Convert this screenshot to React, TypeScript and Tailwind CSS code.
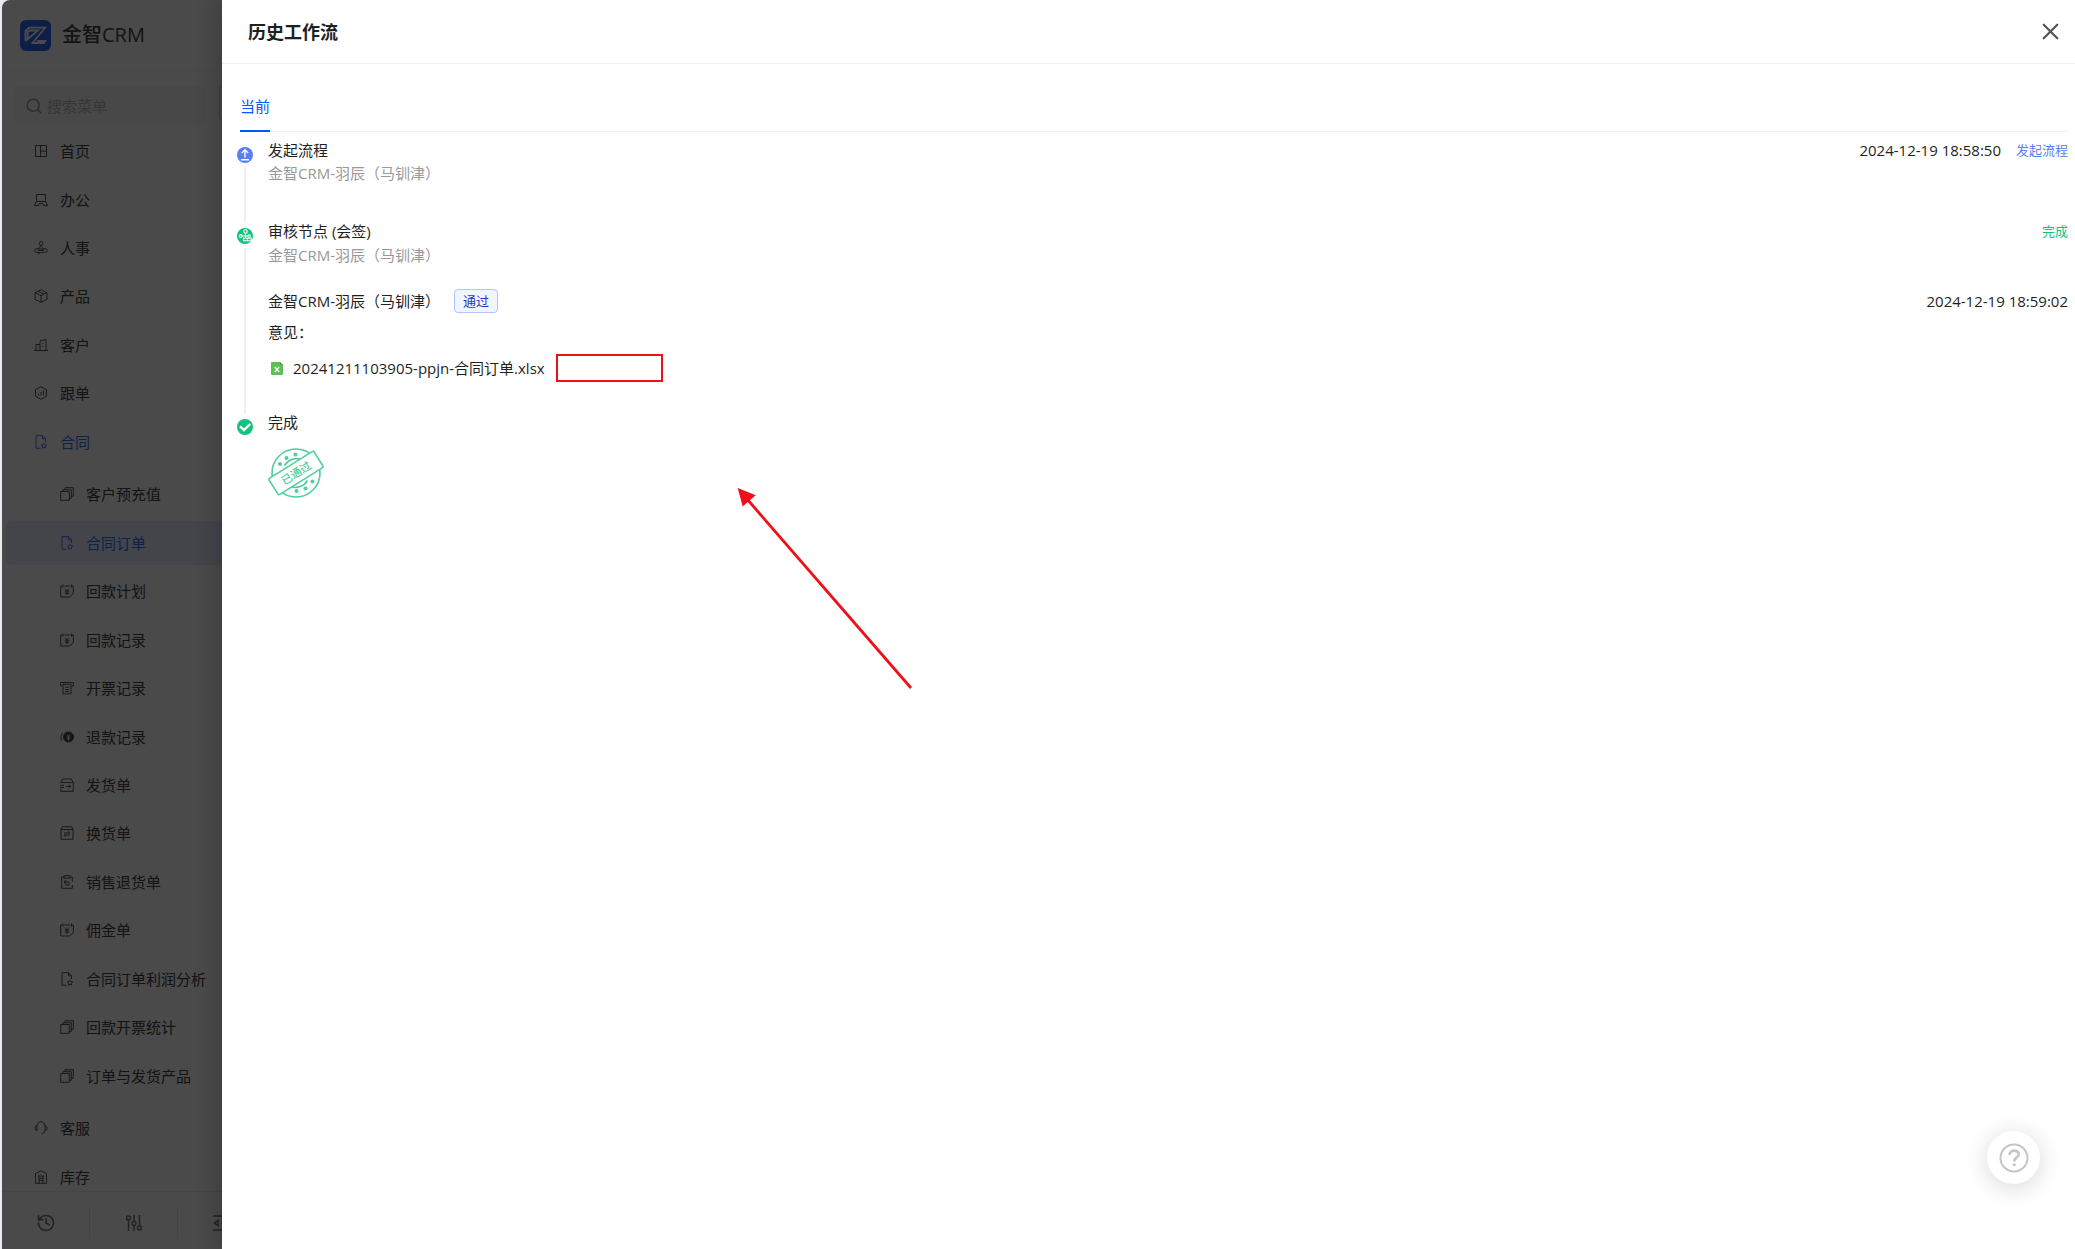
import { Search, X, History } from "lucide-react";
import type { ReactNode } from "react";

const paths: Record<string, ReactNode> = {
    home: <><path d="M1.5 1.5h11v11h-11zM6.5 1.5v11M6.5 7h6" /></>,
    office: <><path d="M2.5 1.5h9v7h-9zM.5 12.5h4l1-2h3l1 2h4M2.5 8.5l-2 4M11.5 8.5l2 4" /></>,
    people: <><circle cx="7" cy="2.4" r="1.9" /><path d="M7 4.3C7 6 5 6 4.4 8h5.2C9 6 7 6 7 4.3M4.4 8C2.5 7.5.8 8 .6 9.5c0 2 2.900 2.200 5 2l-.8 2M9.600 8c1.900-.5 3.600 0 3.800 1.500 0 2-3 2.200-7 2M4 9.500h6" /></>,
    product: <><path d="M7 .7l6 3v6.600l-6 3-6-3V3.700zM1 3.700l6 3 6-3M7 6.700v6.600M4 2.200l6 3" /></>,
    customer: <><path d="M0 12.500h14M2 12.500v-6h4M6 12.500V3l6-1.500v11M4 9h.5M8.500 5.500h1M8.500 8.500h1" /></>,
    follow: <><path d="M7 .7l5.500 3v6.600l-5.500 3-5.500-3V3.700zM4.500 7.500v2M7 6v3.500M9.500 4.500v5" /></>,
    contract: <><path d="M6.500 13.300H2V.7h6.500l3 3v3.500M8.500.7v3h3" /><path d="M10 8.200l.9 1.500 1.700.3-1.200 1.300.2 1.800-1.600-.7-1.600.7.2-1.800L7.400 10l1.700-.3z" /></>,
    copies: <><path d="M.7 4.500h8.600v8.800H.7zM3 4.500V2.700h8.300v8.600H9.300M5 2.700V.700h8.300v8.600h-2" /></>,
    yen: <><path d="M4.500 2H10M2.500 2H.700v11h9l3.600-3.500V2h-1.800M3 .5v3M11.500.5v3M5 4.700l2 2.300 2-2.300M4.800 7.200h4.400M4.800 9.200h4.400M7 7v4" /></>,
    printer: <><path d="M2.500 5H.7V1.500h12.600V5h-1.800M3 3.300h8v9.500H3zM5.200 6.300h3.600M5.200 8.500h3.600M5.200 10.500h3.600" /></>,
    refund: <><circle cx="8.500" cy="7" r="5" fill="currentColor" /><path d="M2.500 3C.5 5.500.5 8.500 2 11" /><path d="M6.800 4.500l1.700 2 1.700-2M6.700 7h3.600M6.700 8.800h3.600M8.500 6.500v4" stroke="#fff" /></>,
    ship: <><path d="M.7 4.500l2-3.500h8.600l2 3.500v8.800H.7V11M.7 4.500h12.600M0 7.300h4M0 9.500h4M6 8.500h4.500M9 6.700l1.700 1.800L9 10.300" /></>,
    swap: <><path d="M1 3.500l1.500-2.800h9L13 3.500v9.800H1zM1 3.500h12M4 7h6L8 5.300M10 9H4l2 1.700" /></>,
    back: <><path d="M4 2H1.700v11.300h10.600V10M12.300 7V2H10M4 .700h6v2.500H4zM4 7h5v3H5M6 5L4 7l2 1.500" /></>,
    service: <><path d="M3 9.500V5C3 2.500 5 .7 7 .7S11 2.500 11 5v4.500C11 11.500 9.500 12.600 7.500 12.800M3 5C.2 5 .2 9.500 3 9.500M11 5c2.800 0 2.800 4.500 0 4.500" /></>,
    stock: <><path d="M1.500 13.300V3.500L7 .7l5.500 2.800v9.800zM4 6h6M5 6v7M9 6v7M5 8.300h4M5 10.500h4" /></>,
};

const MenuIcon = ({ name }: { name: string }) => (
    <svg viewBox="0 0 14 14" className="size-3.5 shrink-0" fill="none" stroke="currentColor" strokeWidth="0.9">
        {paths[name]}
    </svg>
);

const topMenu = [
    { icon: "home", label: "首页" },
    { icon: "office", label: "办公" },
    { icon: "people", label: "人事" },
    { icon: "product", label: "产品" },
    { icon: "customer", label: "客户" },
    { icon: "follow", label: "跟单" },
    { icon: "contract", label: "合同", open: true },
];

const subMenu = [
    { icon: "copies", label: "客户预充值" },
    { icon: "contract", label: "合同订单", active: true },
    { icon: "yen", label: "回款计划" },
    { icon: "yen", label: "回款记录" },
    { icon: "printer", label: "开票记录" },
    { icon: "refund", label: "退款记录" },
    { icon: "ship", label: "发货单" },
    { icon: "swap", label: "换货单" },
    { icon: "back", label: "销售退货单" },
    { icon: "yen", label: "佣金单" },
    { icon: "contract", label: "合同订单利润分析" },
    { icon: "copies", label: "回款开票统计" },
    { icon: "copies", label: "订单与发货产品" },
];

const bottomMenu = [
    { icon: "service", label: "客服" },
    { icon: "stock", label: "库存" },
];

const MenuItem = ({ icon, label, open = false }: { icon: string; label: string; open?: boolean }) => (
    <li className="flex items-center">
        <a href="#" className={`flex h-11 w-full items-center gap-3 pl-8 ${open ? "text-[#3a73f5]" : ""}`}>
            <MenuIcon name={icon} />
            {label}
        </a>
    </li>
);

const SubMenuItem = ({ icon, label, active = false }: { icon: string; label: string; active?: boolean }) => (
    <li className="flex items-center pl-1">
        <a
            href="#"
            className={`flex h-11 w-full items-center gap-3 rounded-md pl-[54px] ${active ? "bg-[#e6eeff] text-[#3a73f5]" : ""}`}>
            <MenuIcon name={icon} />
            {label}
        </a>
    </li>
);

const Logo = () => (
    <svg viewBox="0 0 31 31" className="size-[31px]">
        <rect width="31" height="31" rx="6" fill="#2f6df6" />
        <path d="M5.500 21V11l3.500-3.300h16.200L12.500 23H24l1.200-2H17M5.500 21L18 10.500H9.500L7.700 12v8" fill="none" stroke="#fff" strokeWidth="1.800" />
    </svg>
);

const Sidebar = () => (
    <aside className="relative w-[220px] shrink-0 overflow-hidden rounded-tl-lg bg-white text-[#444]">
        <div className="flex h-full w-[264px] flex-col">
            <div className="flex h-[71px] shrink-0 items-center gap-[11px] border-b border-[#f3f3f3] pl-[18px]">
                <Logo />
                <span className="text-xl font-medium">金智CRM</span>
            </div>
            <div className="mt-[15px] flex shrink-0 gap-3 pl-[11px]">
                <label className="flex h-[39px] w-[194px] items-center gap-1 rounded-lg bg-[#f8f8f8] pl-3 text-[#999]">
                    <Search className="size-[18px] shrink-0" strokeWidth={2} />
                    <input
                        type="text"
                        aria-label="搜索菜单"
                        placeholder="搜索菜单"
                        className="w-36 bg-transparent outline-none placeholder:text-[#bbb]"
                    />
                </label>
                <button aria-label="添加" className="h-[34px] w-8 rounded border border-[#ccc]" />
            </div>
            <nav className="min-h-0 flex-1 overflow-hidden pt-0.5">
                <ul className="grid h-[339px] auto-rows-fr">
                    {topMenu.map((item) => <MenuItem key={item.label} {...item} />)}
                </ul>
                <ul className="my-1 grid h-[630px] auto-rows-fr bg-[#fdfdfd]">
                    {subMenu.map((item) => <SubMenuItem key={item.label} {...item} />)}
                </ul>
                <ul className="grid h-[97px] auto-rows-fr">
                    {bottomMenu.map((item) => <MenuItem key={item.label} {...item} />)}
                </ul>
            </nav>
            <div className="grid h-[58px] shrink-0 grid-cols-3 items-center divide-x divide-[#e5e5e5] border-t border-[#eee] pt-1 text-[#777]">
                <button aria-label="历史" className="flex h-8 items-center justify-center">
                    <History className="size-5" strokeWidth={2} />
                </button>
                <button aria-label="设置" className="flex h-8 items-center justify-center">
                    <svg viewBox="0 0 16 16" className="size-4" fill="none" stroke="currentColor" strokeWidth="1.500">
                        <path d="M2.500 5v11M8 0v6M8 11v5M13.500 0v11" />
                        <circle cx="2.500" cy="3" r="2" />
                        <circle cx="8" cy="8.500" r="2" />
                        <circle cx="13.500" cy="13" r="2" />
                    </svg>
                </button>
                <button aria-label="收起" className="flex h-8 items-center justify-center">
                    <svg viewBox="0 0 18 16" className="h-4 w-[18px]" fill="none" stroke="currentColor" strokeWidth="1.500">
                        <path d="M0 1h18M0 15h18M8 8h10" />
                        <path d="M5 5.500v5L1.500 8z" />
                    </svg>
                </button>
            </div>
        </div>
        <div className="absolute inset-0 bg-black/71" />
    </aside>
);

const StartIcon = () => (
    <svg viewBox="0 0 16 16" className="size-4">
        <circle cx="8" cy="8" r="8" fill="#597ef7" />
        <path d="M8 10.500V3M4.800 6L8 2.800 11.200 6M4 12.700h8" fill="none" stroke="#fff" strokeWidth="1.400" />
    </svg>
);

const ReviewIcon = () => (
    <svg viewBox="0 0 16 16" className="size-4">
        <circle cx="8" cy="8" r="8" fill="#13c27d" />
        <g fill="none" stroke="#fff" strokeWidth="1.100">
            <circle cx="8.500" cy="3.500" r="1.700" />
            <circle cx="3.800" cy="8" r="1.400" />
            <circle cx="12" cy="8" r="1.300" />
            <path d="M8.500 5.200V10M5.200 8h5.500M6.500 10.200h4v2.500h-4zM10.500 12.700h3.700v-2.500h-3.700" />
        </g>
    </svg>
);

const DoneIcon = () => (
    <svg viewBox="0 0 16 16" className="size-4">
        <circle cx="8" cy="8" r="8" fill="#13c27d" />
        <path d="M3 7.300l3.900 3.700 6.300-6" fill="none" stroke="#fff" strokeWidth="2.400" />
    </svg>
);

const FileIcon = () => (
    <svg viewBox="0 0 12 13" className="h-[13px] w-3 shrink-0">
        <path d="M1 0h8l3 3v9a1 1 0 0 1-1 1H1a1 1 0 0 1-1-1V1a1 1 0 0 1 1-1z" fill="#5bc153" />
        <path d="M9 0l3 3H9z" fill="#3fa33a" />
        <path d="M3.800 5l4.400 5M8.200 5l-4.400 5" stroke="#fff" strokeWidth="1.200" />
    </svg>
);

const Stamp = () => (
    <svg viewBox="0 0 56 50" className="h-[50px] w-14" fill="none" stroke="#4fcf9f" strokeWidth="1.600">
        <circle cx="28" cy="25" r="24" />
        <path d="M16.500 17.500a14 14 0 0 1 17-6M39.500 32.500a14 14 0 0 1-17 6" />
        <g fill="#4fcf9f" stroke="none">
            <circle cx="12" cy="16" r="2" />
            <circle cx="18.500" cy="10" r="2" />
            <circle cx="27.500" cy="6.500" r="2" />
            <circle cx="28.500" cy="43" r="2" />
            <circle cx="37.500" cy="40.500" r="2" />
            <circle cx="44.500" cy="33.500" r="2" />
        </g>
        <g transform="rotate(-32 28 25)">
            <rect x="1.500" y="15.500" width="53" height="19" rx="1.500" fill="#fff" />
            <text x="28" y="29" textAnchor="middle" fontSize="11" fontWeight="500" fill="#4fcf9f" stroke="none">已通过</text>
        </g>
    </svg>
);

const Step = ({ icon, title, status, children, last = false }: {
    icon: ReactNode;
    title: string;
    status?: ReactNode;
    children?: ReactNode;
    last?: boolean;
}) => (
    <li className="flex gap-[15px]">
        <div className="flex w-4 flex-col items-center gap-1 pt-[5px]">
            {icon}
            {!last && <span className="w-0.5 flex-1 bg-[#f0f0f0]" />}
        </div>
        <div className="flex-1">
            <div className="flex items-center justify-between leading-4">
                <h3>{title}</h3>
                {status}
            </div>
            {children}
        </div>
    </li>
);

const Drawer = () => (
    <main className="relative z-10 flex-1 bg-white shadow-[-6px_0_20px_rgba(0,0,0,0.18)]">
        <header className="flex h-16 items-center justify-between border-b border-[#f0f0f0] pl-[26px] pr-[11px]">
            <h2 className="text-lg font-bold">历史工作流</h2>
            <button aria-label="关闭" className="text-[#555]">
                <X className="size-[27px]" strokeWidth={2} absoluteStrokeWidth />
            </button>
        </header>
        <section className="pl-[15px] pr-[7px] pt-[18px]">
            <div role="tablist" className="ml-[3px] flex border-b border-[#f0f0f0]">
                <button role="tab" aria-selected="true" className="-mb-px h-[50px] border-b-2 border-[#005bff] text-[#005bff]">
                    当前
                </button>
            </div>
            <ol className="pt-2.5">
                <Step
                    icon={<StartIcon />}
                    title="发起流程"
                    status={
                        <div className="flex gap-[15px]">
                            <time>2024-12-19 18:58:50</time>
                            <span className="text-[13px] text-[#597ef7]">发起流程</span>
                        </div>
                    }>
                    <p className="mt-[7px] pb-[42px] leading-4 text-[#999]">金智CRM-羽辰（马钏津）</p>
                </Step>
                <Step
                    icon={<ReviewIcon />}
                    title="审核节点 (会签)"
                    status={<span className="text-[13px] text-[#13c27d]">完成</span>}>
                    <p className="mt-2 leading-4 text-[#999]">金智CRM-羽辰（马钏津）</p>
                    <div className="mt-[26px] flex items-center">
                        <span>金智CRM-羽辰（马钏津）</span>
                        <span className="ml-3.5 flex h-6 items-center rounded border border-[#adc6ff] bg-[#f0f5ff] px-2 text-[13px] text-[#1d39c4]">通过</span>
                        <time className="ml-auto">2024-12-19 18:59:02</time>
                    </div>
                    <p className="mt-[11px] leading-4">意见：</p>
                    <div className="mt-3.5 mb-8 flex items-center pl-[3px]">
                        <FileIcon />
                        <a href="#" className="ml-2.5">20241211103905-ppjn-合同订单.xlsx</a>
                        <span className="ml-[11px] h-7 w-[107px] border-2 border-[#ed1018]" />
                    </div>
                </Step>
                <Step icon={<DoneIcon />} title="完成" last>
                    <div className="mt-[18px]">
                        <Stamp />
                    </div>
                </Step>
            </ol>
        </section>
        {/* arrow lies over the drawer */}
        <svg viewBox="0 0 176 203" className="pointer-events-none absolute left-[515px] top-[487px] h-[203px] w-44">
            <path d="M10 12L174 201" stroke="#ed1018" strokeWidth="2.800" />
            <path d="M.7 1l18 7.200L5.700 19.500z" fill="#ed1018" />
        </svg>
        <button
            aria-label="帮助"
            className="absolute bottom-[65px] right-[35px] flex size-[53px] items-center justify-center rounded-full bg-white shadow-[0_4px_24px_rgba(0,0,0,0.16)]">
            <svg viewBox="0 0 30 30" className="size-[30px]" fill="none" stroke="#c4c5c9" strokeWidth="2">
                <circle cx="15" cy="15" r="13.500" />
                <path d="M10.500 12c0-6 9.500-5.500 9.300-.5-.2 3-4.600 3-4.600 7" strokeWidth="2.600" />
                <path d="M13.700 20.500h3v2.500h-3z" fill="#c4c5c9" stroke="none" />
            </svg>
        </button>
    </main>
);

export default function App() {
    return (
        <div className="flex h-screen overflow-hidden bg-[#e8ebf2] pl-0.5 font-['Open_Sans','Noto_Sans_CJK_SC',sans-serif] text-[15px] leading-6 text-[#1f1f1f]">
            <Sidebar />
            <Drawer />
        </div>
    );
}
